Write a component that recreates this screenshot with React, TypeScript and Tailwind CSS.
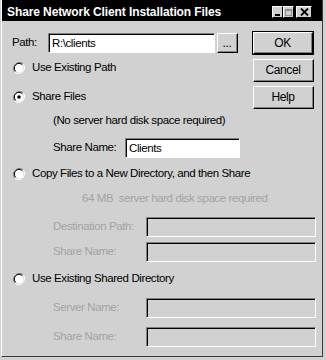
import React from "react";

const font = { fontFamily: '"Liberation Sans", Arial, sans-serif' };

function Radio({ checked }: { checked?: boolean }) {
  return (
    <svg width="12" height="12" viewBox="0 0 12 12" className="shrink-0">
      <path d="M10.2 1.8 A6 6 0 0 0 1.8 10.2" fill="none" stroke="#808080" strokeWidth="1" />
      <path d="M1.8 10.2 A6 6 0 0 0 10.2 1.8" fill="none" stroke="#ffffff" strokeWidth="1" />
      <circle cx="6" cy="6" r="4.6" fill="#ffffff" />
      <path d="M9.3 2.7 A4.6 4.6 0 0 0 2.7 9.3" fill="none" stroke="#000000" strokeWidth="1" />
      {checked && <circle cx="6" cy="6" r="1.8" fill="#000000" />}
    </svg>
  );
}

function Field({ value, disabled, className }: { value?: string; disabled?: boolean; className: string }) {
  return (
    <div
      className={`h-[20px] shrink-0 border-t border-l border-t-[#808080] border-l-[#808080] border-b border-r border-b-white border-r-white ${className}`}
    >
      <div
        className={`h-full border-t border-l border-t-black border-l-black flex items-center px-[2px] text-black ${
          disabled ? "bg-[#d1d1d1]" : "bg-white"
        }`}
      >
        {value}
      </div>
    </div>
  );
}

function Btn({ label, isDefault, className }: { label: string; isDefault?: boolean; className: string }) {
  const inner = (
    <div className="h-full w-full border-t border-l border-t-white border-l-white border-b border-r border-b-black border-r-black">
      <div className="h-full w-full border-b border-r border-b-[#808080] border-r-[#808080] flex items-center justify-center text-[12px] text-black">
        {label}
      </div>
    </div>
  );
  return isDefault ? (
    <div className={`border border-black ${className}`}>{inner}</div>
  ) : (
    <div className={className}>{inner}</div>
  );
}

function TitleBtn({ children, className }: { children: React.ReactNode; className?: string }) {
  return (
    <div
      className={`h-[12px] bg-[#d1d1d1] border-t border-l border-t-white border-l-white border-b border-r border-b-black border-r-black flex items-center justify-center ${className}`}
    >
      {children}
    </div>
  );
}

export default function App() {
  return (
    <div className="w-[326px] h-[360px] bg-[#d1d1d1] pl-[1px] pr-[3px] pb-[3px]" style={font}>
      <div className="h-full flex flex-col border-l border-l-white border-r border-b border-r-[#3a3a3a] border-b-[#3a3a3a] text-[11.5px] tracking-[-0.4px] text-black">
        <div className="h-[21px] bg-black flex items-center pl-[5px] pr-[10px] pt-[3px] shrink-0">
          <span className="text-white font-bold text-[12px] tracking-[-0.1px] flex-1">
            Share Network Client Installation Files
          </span>
          <div className="flex items-center">
            <TitleBtn className="w-[11px]">
              <div className="w-[5px] h-[2px] bg-black mt-[5px]" />
            </TitleBtn>
            <TitleBtn className="w-[11px]">
              <div className="w-[7px] h-[7px] border border-[#909090] border-t-2" />
            </TitleBtn>
            <TitleBtn className="w-[16px] ml-[2px]">
              <svg width="9" height="8" viewBox="0 0 9 8">
                <path d="M1 0.5 L8 7.5 M8 0.5 L1 7.5" stroke="black" strokeWidth="1.8" />
              </svg>
            </TitleBtn>
          </div>
        </div>

        <div className="flex">
          <div className="w-[250px] shrink-0 pl-[10px] pt-[12px] flex flex-col whitespace-nowrap">
            <div className="h-[20px] flex items-center">
              <span className="w-[36px] shrink-0">Path:</span>
              <Field value="R:\clients" className="w-[167px]" />
              <Btn label="..." className="w-[21px] h-[20px] ml-[2px]" />
            </div>
            <div className="h-[20px] mt-[5px] flex items-center pl-[1px] gap-[7px]">
              <Radio />
              <span>Use Existing Path</span>
            </div>
            <div className="h-[20px] mt-[9px] flex items-center pl-[1px] gap-[7px]">
              <Radio checked />
              <span>Share Files</span>
            </div>
            <div className="h-[20px] mt-[4px] flex items-center pl-[41px]">
              (No server hard disk space required)
            </div>
            <div className="h-[20px] mt-[7px] flex items-center pl-[41px]">
              <span className="w-[72px] shrink-0">Share Name:</span>
              <Field value="Clients" className="w-[115px]" />
            </div>
          </div>
          <div className="flex flex-col pt-[10px] gap-[4px]">
            <Btn label="OK" isDefault className="w-[62px] h-[24px]" />
            <Btn label="Cancel" className="w-[61px] h-[23px] ml-[1px]" />
            <Btn label="Help" className="w-[61px] h-[23px] ml-[1px]" />
          </div>
        </div>

        <div className="flex flex-col pl-[10px] whitespace-nowrap">
          <div className="h-[20px] mt-[6px] flex items-center pl-[1px] gap-[7px]">
            <Radio />
            <span>Copy Files to a New Directory, and then Share</span>
          </div>
          <div className="h-[20px] mt-[5px] flex items-center pl-[70px] text-[#a3a3a3] whitespace-pre">
            64 MB  server hard disk space required
          </div>
          <div className="h-[20px] mt-[8px] flex items-center pl-[41px] text-[#a3a3a3]">
            <span className="w-[93px] shrink-0">Destination Path:</span>
            <Field disabled className="w-[170px]" />
          </div>
          <div className="h-[20px] mt-[5px] flex items-center pl-[41px] text-[#a3a3a3]">
            <span className="w-[93px] shrink-0">Share Name:</span>
            <Field disabled className="w-[170px]" />
          </div>
          <div className="h-[20px] mt-[7px] flex items-center pl-[1px] gap-[7px]">
            <Radio />
            <span>Use Existing Shared Directory</span>
          </div>
          <div className="h-[20px] mt-[9px] flex items-center pl-[41px] text-[#a3a3a3]">
            <span className="w-[93px] shrink-0">Server Name:</span>
            <Field disabled className="w-[170px]" />
          </div>
          <div className="h-[20px] mt-[9px] flex items-center pl-[41px] text-[#a3a3a3]">
            <span className="w-[93px] shrink-0">Share Name:</span>
            <Field disabled className="w-[170px]" />
          </div>
        </div>
      </div>
    </div>
  );
}
